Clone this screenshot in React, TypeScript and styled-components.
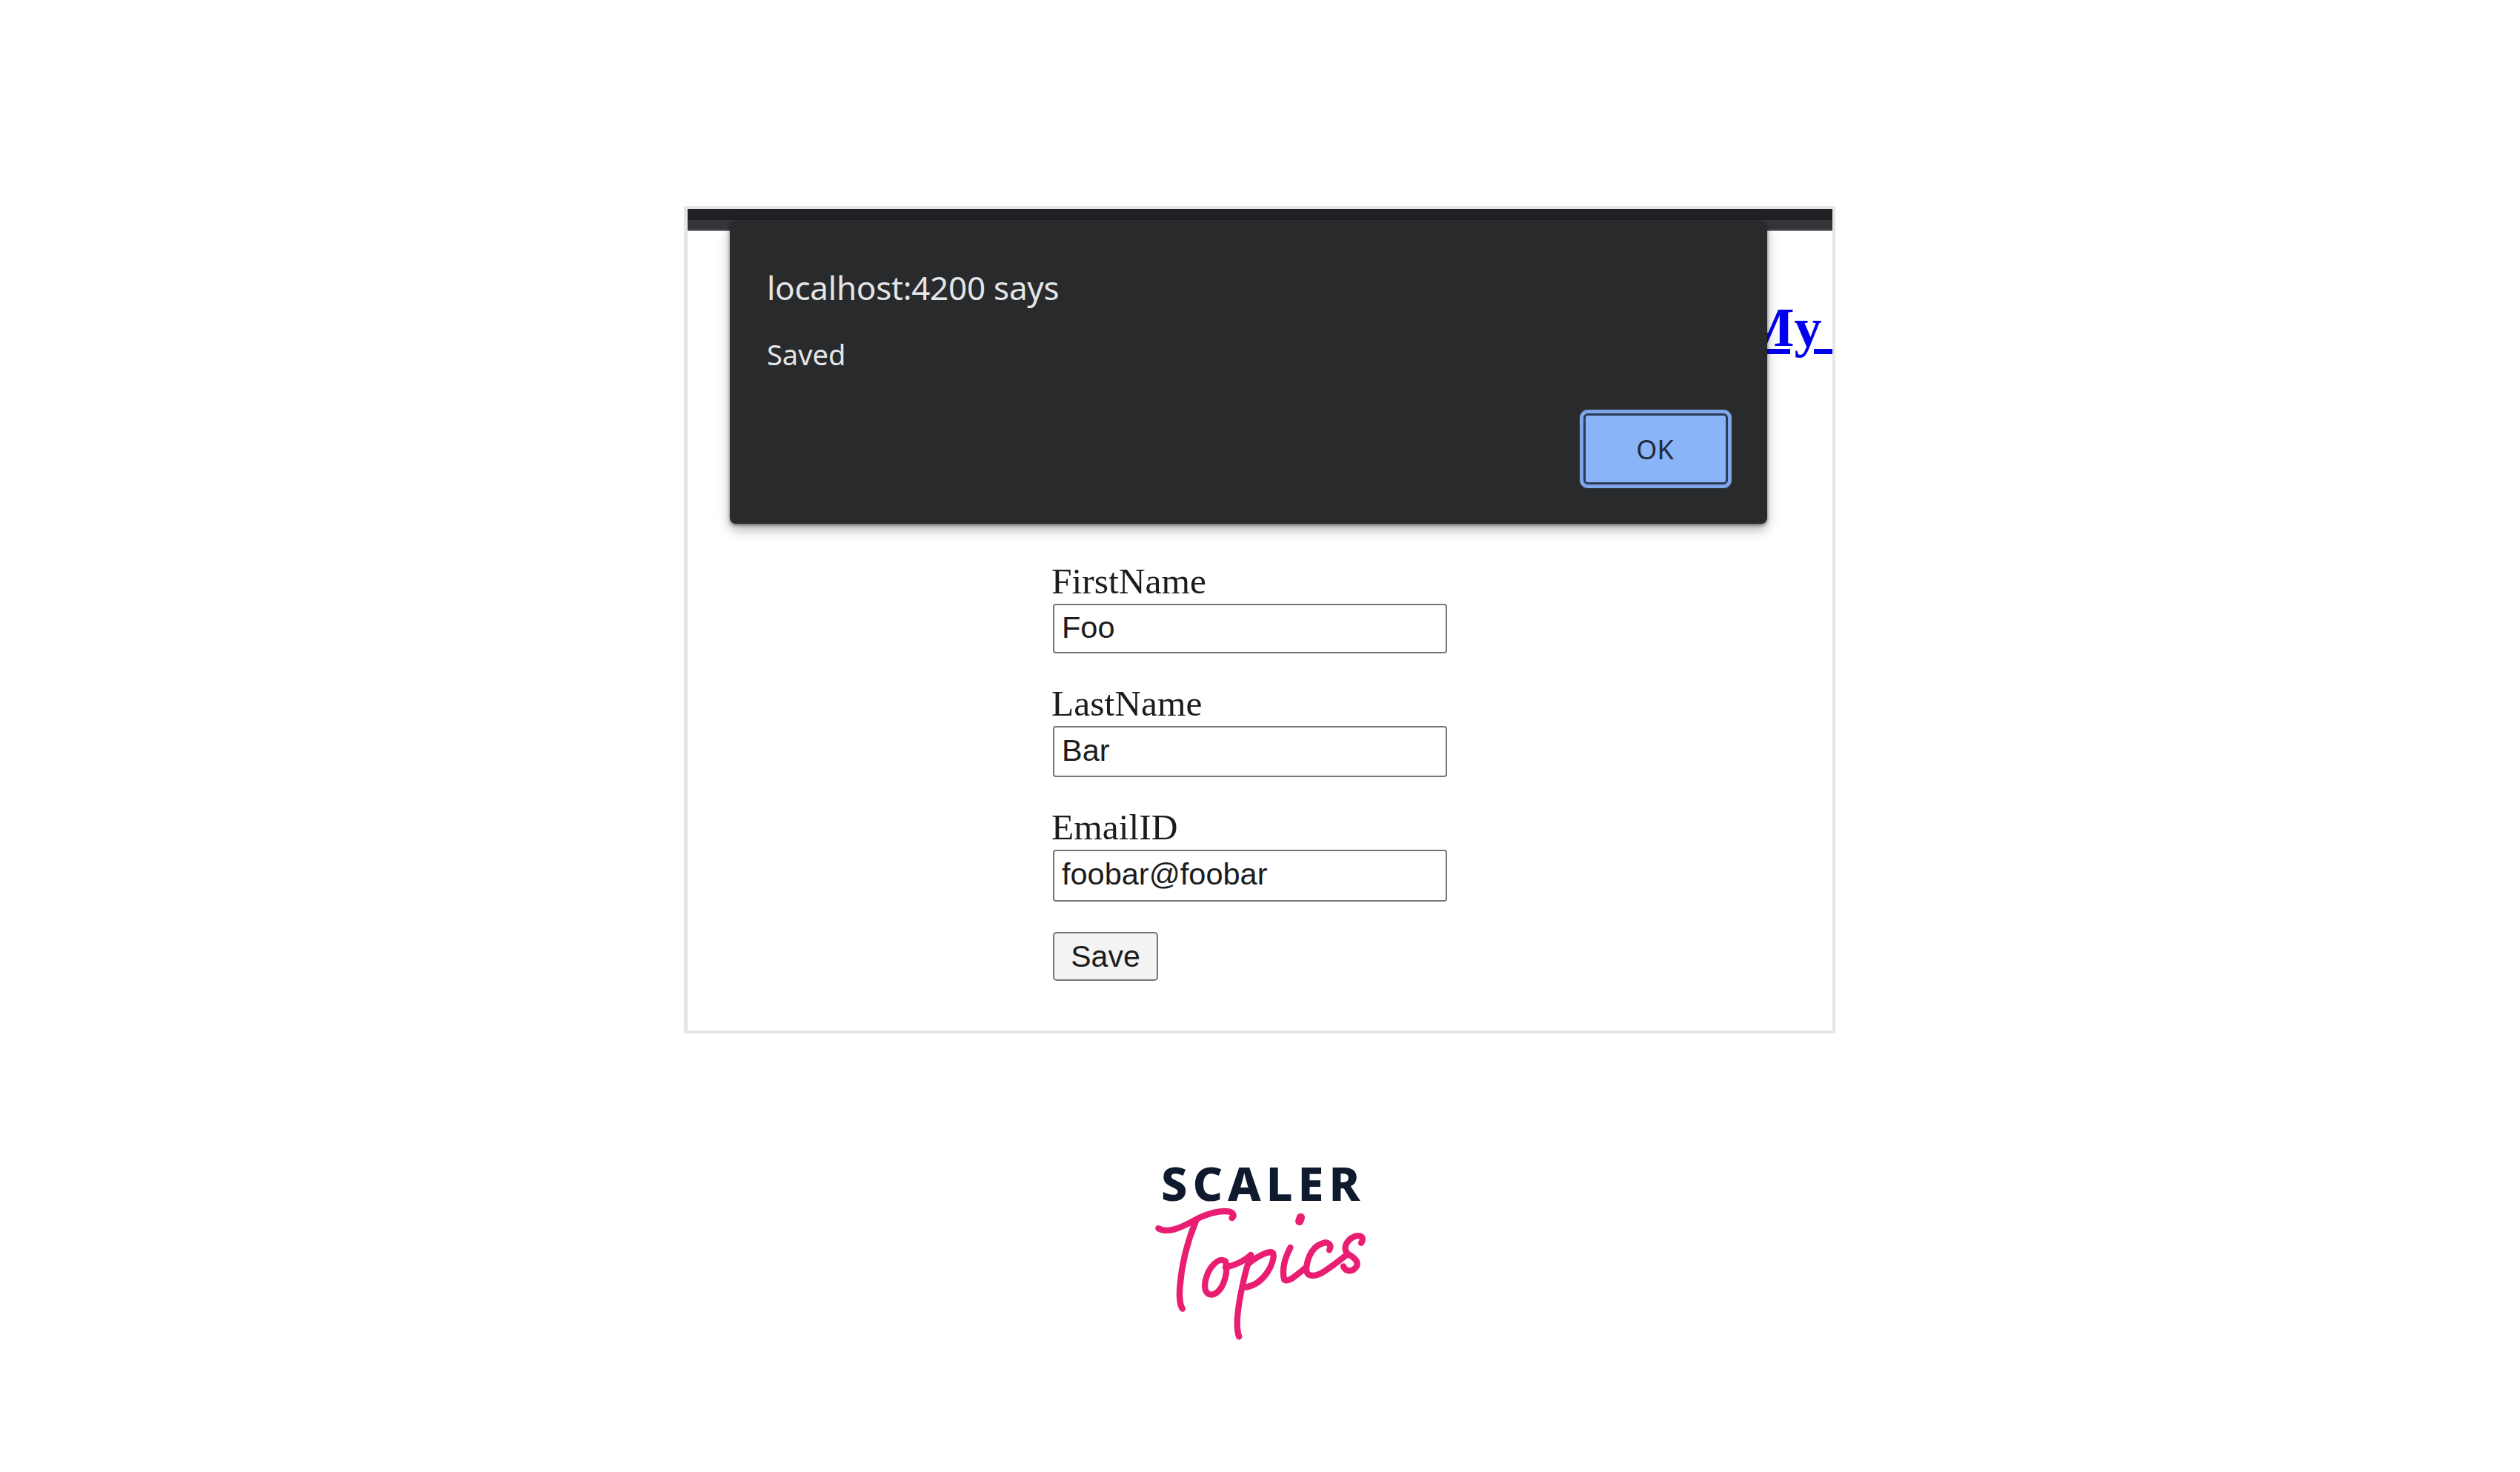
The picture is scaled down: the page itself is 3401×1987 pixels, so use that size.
import React from "react";
import styled, { createGlobalStyle } from "styled-components";

const Global = createGlobalStyle`
  html, body { margin: 0; padding: 0; background: #fff; }
`;

const Page = styled.div`
  width: 3401px;
  height: 1987px;
  padding-top: 278px;
  box-sizing: border-box;
  display: flex;
  flex-direction: column;
  align-items: center;
  overflow: hidden;
`;

const Frame = styled.div`
  position: relative;
  width: 1554px;
  margin-right: 1px;
  box-sizing: border-box;
  border: 4px solid #e6e6e6;
  border-left-width: 5px;
  background: #fff;
  overflow: hidden;
`;

const BrowserBar = styled.div`
  height: 30px;
  display: flex;
  flex-direction: column;
`;

const BarTop = styled.div`
  height: 15px;
  background: #202124;
`;

const BarBottom = styled.div`
  height: 15px;
  box-sizing: border-box;
  background: #35363a;
  border-bottom: 2px solid #6f7072;
`;

const Header = styled.div`
  height: 446px;
  box-sizing: border-box;
  padding-top: 88px;
  display: flex;
  justify-content: flex-end;
  align-items: flex-start;
`;

const HeaderLink = styled.a`
  margin-right: -4px;
  font: 700 74px/85px "Liberation Serif", serif;
  color: #0000ee;
  text-decoration: underline;
  white-space: pre;
`;

const Form = styled.form`
  padding: 0 0 67px 493px;
  display: flex;
  flex-direction: column;
  align-items: flex-start;
  gap: 41px;
`;

const Field = styled.div`
  display: flex;
  flex-direction: column;
  align-items: flex-start;
`;

const Label = styled.label`
  margin-left: -2px;
  padding-bottom: 4px;
  font: 400 49.5px/53px "Liberation Serif", serif;
  color: #1c1c1c;
`;

const Input = styled.input<{ $height: number }>`
  width: 532px;
  height: ${(p) => p.$height}px;
  box-sizing: border-box;
  border: 2px solid #767676;
  border-radius: 4px;
  padding: 0 10px 4px;
  margin: 0;
  font: 400 41.5px "Liberation Sans", sans-serif;
  color: #1c1c1c;
  background: #fff;
  outline: none;
`;

const SaveButton = styled.button`
  width: 142px;
  height: 66px;
  box-sizing: border-box;
  border: 2px solid #767676;
  border-radius: 5px;
  background: #f3f3f3;
  padding: 0;
  font: 400 41px "Liberation Sans", sans-serif;
  color: #1c1c1c;
`;

const Dialog = styled.div`
  position: absolute;
  left: 57px;
  top: 16px;
  width: 1400px;
  height: 409px;
  box-sizing: border-box;
  padding: 60px 53px 53px 50px;
  background: #292a2c;
  border-radius: 8px;
  box-shadow: 0 8px 16px rgba(0, 0, 0, 0.3), 0 2px 4px rgba(0, 0, 0, 0.45);
  display: flex;
  flex-direction: column;
`;

const DialogTitle = styled.div`
  font: 400 44px/60px "Noto Sans", sans-serif;
  letter-spacing: -0.25px;
  color: #e3e5e8;
`;

const DialogMessage = styled.div`
  margin-top: 35px;
  font: 400 38px/50px "Noto Sans", sans-serif;
  color: #e3e5e8;
`;

const OkButton = styled.button`
  margin-top: auto;
  align-self: flex-end;
  width: 195px;
  height: 96px;
  box-sizing: border-box;
  border: 3px solid #2b3a55;
  border-radius: 6px;
  background: #8ab4f8;
  box-shadow: 0 0 0 5px #7ea6e8;
  padding: 0 2px 0 0;
  font: 400 36px "Noto Sans", sans-serif;
  color: #202a3c;
`;

const Logo = styled.div`
  margin-top: 170px;
  width: 341px;
  display: flex;
  flex-direction: column;
  align-items: flex-start;
`;

const LogoWord = styled.div`
  font: 800 63px/64px "Noto Sans", sans-serif;
  letter-spacing: 7px;
  color: #101a2e;
  margin-left: 37px;
`;

const LogoScript = styled.svg`
  display: block;
  width: 341px;
  height: 210px;
  margin-top: -4px;
  fill: none;
  stroke: #e91e72;
  stroke-width: 25;
  stroke-linecap: round;
  stroke-linejoin: round;
`;

export default function App() {
  return (
    <Page>
      <Global />
      <Frame>
        <BrowserBar>
          <BarTop />
          <BarBottom />
        </BrowserBar>
        <Header>
          <HeaderLink href="#">{"My "}</HeaderLink>
        </Header>
        <Form>
          <Field>
            <Label>FirstName</Label>
            <Input $height={67} defaultValue="Foo" />
          </Field>
          <Field>
            <Label>LastName</Label>
            <Input $height={69} defaultValue="Bar" />
          </Field>
          <Field>
            <Label>EmailID</Label>
            <Input $height={70} defaultValue="foobar@foobar" />
          </Field>
          <SaveButton type="button">Save</SaveButton>
        </Form>
        <Dialog>
          <DialogTitle>localhost:4200 says</DialogTitle>
          <DialogMessage>Saved</DialogMessage>
          <OkButton type="button">OK</OkButton>
        </Dialog>
      </Frame>
      <Logo>
        <LogoWord>SCALER</LogoWord>
        <LogoScript viewBox="0 215 1024 630" role="img" aria-label="Topics">
          <path d="M100 314C135 335 185 315 240 285C290 256 350 240 385 246C405 250 410 265 398 272" />
          <path d="M252 285C225 350 195 450 187 555C184 600 190 630 198 640" />
          <g transform="translate(240 210)">
            <path d="M132 238C105 218 62 260 50 320C42 370 70 385 100 362C125 340 145 280 132 238" />
            <path d="M132 262C165 255 205 240 235 212" />
            <path d="M235 212C210 280 185 400 180 470C178 510 182 530 187 543" />
            <path d="M228 245C265 215 315 190 325 205C335 240 290 330 215 343" />
            <path d="M395 182C375 220 360 270 370 312C385 325 420 295 455 265" />
            <path d="M437 60L432 75" strokeWidth="34" />
            <path d="M553 192C565 170 545 155 525 165C490 175 465 215 460 265C456 300 490 305 530 280C570 255 600 230 625 210" />
            <path d="M682 163C700 135 670 125 640 145C610 170 610 200 640 215C670 235 675 255 650 272C630 282 615 272 610 258" />
          </g>
        </LogoScript>
      </Logo>
    </Page>
  );
}
